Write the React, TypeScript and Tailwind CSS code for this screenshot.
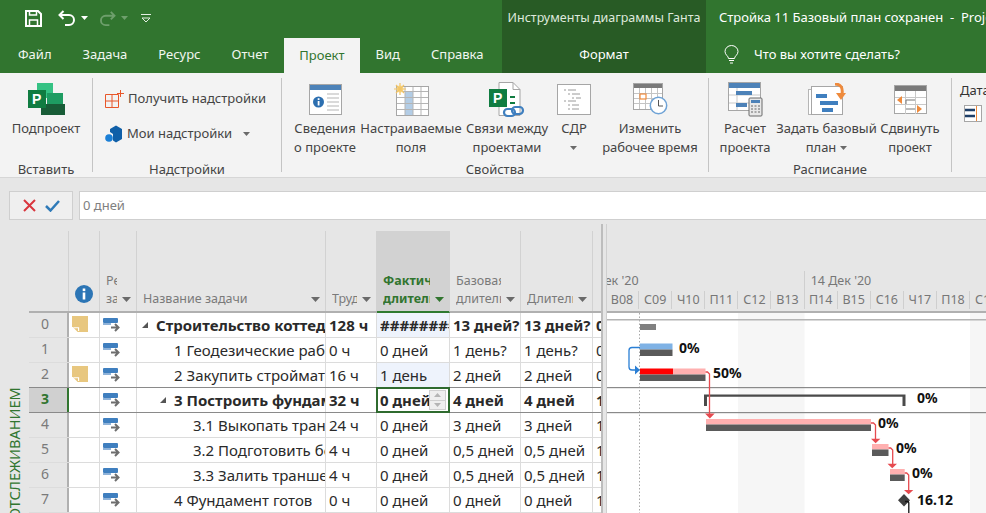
import React from 'react';

const rows = [
  { n: '0', note: true, indent: 'pl-[5px]', arrow: true, bold: true, name: 'Строительство коттеджа', work: '128 ч', fact: '##########', base: '13 дней?', dur: '13 дней?', next: '0', changed: true },
  { n: '1', note: false, indent: 'pl-[37px]', arrow: false, bold: false, name: '1 Геодезические работы', work: '0 ч', fact: '0 дней', base: '1 день?', dur: '1 день?', next: '0', changed: false },
  { n: '2', note: true, indent: 'pl-[37px]', arrow: false, bold: false, name: '2 Закупить стройматериалы', work: '16 ч', fact: '1 день', base: '2 дней', dur: '2 дней', next: '0', changed: true },
  { n: '3', note: false, indent: 'pl-[23px]', arrow: true, bold: true, name: '3 Построить фундамент', work: '32 ч', fact: '0 дней', base: '4 дней', dur: '4 дней', next: '1', changed: false },
  { n: '4', note: false, indent: 'pl-[56px]', arrow: false, bold: false, name: '3.1 Выкопать траншею', work: '24 ч', fact: '0 дней', base: '3 дней', dur: '3 дней', next: '1', changed: false },
  { n: '5', note: false, indent: 'pl-[56px]', arrow: false, bold: false, name: '3.2 Подготовить бетон', work: '4 ч', fact: '0 дней', base: '0,5 дней', dur: '0,5 дней', next: '1', changed: false },
  { n: '6', note: false, indent: 'pl-[56px]', arrow: false, bold: false, name: '3.3 Залить траншею', work: '4 ч', fact: '0 дней', base: '0,5 дней', dur: '0,5 дней', next: '1', changed: false },
  { n: '7', note: false, indent: 'pl-[37px]', arrow: false, bold: false, name: '4 Фундамент готов', work: '0 ч', fact: '0 дней', base: '0 дней', dur: '0 дней', next: '1', changed: false },
];

const days = ['В08', 'С09', 'Ч10', 'П11', 'С12', 'В13', 'П14', 'В15', 'С16', 'Ч17', 'П18', 'С19'];

const Caret = ({ className = 'fill-[#6a6a6a]' }: { className?: string }) => (
  <svg width="7" height="4" viewBox="0 0 7 4" className={className}>
    <path d="M0 0h7L3.5 4z" />
  </svg>
);

const SubprojectIcon = () => (
  <svg width="38" height="34" viewBox="0 0 38 34">
    <rect x="10" y="1" width="16" height="15" fill="#35c284" />
    <rect x="20" y="11" width="16" height="13" fill="#1e9c62" />
    <rect x="14" y="22" width="24" height="11" fill="#185c37" />
    <rect x="1" y="8" width="18" height="18" fill="#107c41" />
    <text x="5" y="22" fontSize="14" fontWeight="700" fill="#fff" fontFamily="Liberation Sans">P</text>
  </svg>
);

const InfoIcon = () => (
  <svg width="33" height="31" viewBox="0 0 33 31">
    <rect x="0.5" y="0.5" width="32" height="30" fill="#fff" stroke="#a6a6a6" />
    <rect x="1" y="1" width="31" height="5" fill="#4d82b8" />
    <circle cx="9.5" cy="18" r="5.5" fill="#2c6fb0" />
    <rect x="8.7" y="17" width="1.8" height="4.5" fill="#fff" />
    <rect x="8.7" y="14.2" width="1.8" height="1.8" fill="#fff" />
    <path d="M18 10h12M18 14h12M18 18h12M18 22h12M18 26h12" stroke="#b5b5b5" />
  </svg>
);

const FieldsIcon = () => (
  <svg width="36" height="33" viewBox="0 0 36 33">
    <rect x="3.5" y="3.5" width="32" height="29" fill="#fff" stroke="#a6a6a6" />
    <rect x="12" y="8" width="8" height="24" fill="#b3cde6" />
    <path d="M4 8.5h31M4 14.5h31M4 20.5h31M4 26.5h31M12 4v28M20 4v28M28 4v28" stroke="#b5b5b5" />
    <circle cx="7" cy="6" r="3.5" fill="#f7d98c" />
    <path d="M7 0v12M1 6h12M3 2l8 8M11 2l-8 8" stroke="#f3c566" strokeWidth="1.2" />
  </svg>
);

const LinksIcon = () => (
  <svg width="38" height="37" viewBox="0 0 38 37">
    <path d="M11 1.5h14l7 7v26H11z" fill="#fff" stroke="#a6a6a6" />
    <path d="M25 1.5v7h7" fill="none" stroke="#a6a6a6" />
    <rect x="1" y="8" width="18" height="18" fill="#107c41" />
    <text x="5" y="22" fontSize="14" fontWeight="700" fill="#fff" fontFamily="Liberation Sans">P</text>
    <path d="M22 16h5M22 22h5" stroke="#107c41" strokeWidth="2" />
    <rect x="16" y="28" width="11" height="7" rx="3.5" fill="none" stroke="#3f7fbf" strokeWidth="2.2" />
    <rect x="24" y="26" width="11" height="7" rx="3.5" fill="none" stroke="#3f7fbf" strokeWidth="2.2" />
  </svg>
);

const WbsIcon = () => (
  <svg width="34" height="31" viewBox="0 0 34 31">
    <rect x="0.5" y="0.5" width="33" height="30" fill="#fff" stroke="#a6a6a6" />
    <path d="M7 6h2M11 6h8M11 10h2M15 10h8M15 14h2M19 14h5M7 17h2M11 17h8M11 21h2M15 21h7M11 25h2M15 25h7" stroke="#9a9a9a" />
  </svg>
);

const CalendarIcon = () => (
  <svg width="35" height="32" viewBox="0 0 35 32">
    <rect x="0.5" y="0.5" width="29" height="26" fill="#fff" stroke="#a6a6a6" />
    <rect x="1" y="1" width="28" height="4" fill="#7a7a7a" />
    <path d="M1 10.5h28M1 15.5h28M1 20.5h28M6.5 5v21M12.5 5v21M18.5 5v21M24.5 5v21" stroke="#c4c4c4" />
    <rect x="7" y="11" width="6" height="5" fill="#fff" stroke="#ee8a3c" strokeWidth="1.2" />
    <circle cx="25.5" cy="22.5" r="8.2" fill="#fff" stroke="#6fa3d6" strokeWidth="1.5" />
    <path d="M25.5 17v6h4.5" fill="none" stroke="#555" />
  </svg>
);

const CalcIcon = () => (
  <svg width="35" height="35" viewBox="0 0 35 35">
    <rect x="0.5" y="0.5" width="32" height="28" fill="#fff" stroke="#a6a6a6" />
    <rect x="1" y="1" width="31" height="5" fill="#4d82b8" />
    <path d="M9 6v22M1 13h31M1 21h31" stroke="#c9c9c9" />
    <rect x="8" y="9" width="16" height="4" fill="#4d82b8" />
    <rect x="8" y="21" width="11" height="4" fill="#4d82b8" />
    <rect x="21" y="16" width="13" height="18" rx="1" fill="#e8e8e8" stroke="#6a6a6a" />
    <rect x="23" y="18" width="9" height="3" fill="#4d82b8" />
    <path d="M23 24h2M26.5 24h2M30 24h2M23 27h2M26.5 27h2M30 27h2M23 30h2M26.5 30h2M30 30h2" stroke="#666" />
  </svg>
);

const BaselineIcon = () => (
  <svg width="38" height="33" viewBox="0 0 38 33">
    <rect x="0.5" y="6.5" width="31" height="25" fill="#fff" stroke="#b5b5b5" />
    <rect x="3.5" y="3.5" width="31" height="28" fill="#fff" stroke="#a6a6a6" />
    <rect x="8" y="11" width="11" height="4" fill="#3f7fbf" />
    <rect x="12" y="18" width="18" height="4" fill="#3f7fbf" />
    <rect x="14" y="25" width="11" height="4" fill="#3f7fbf" />
    <path d="M27 1c6 0 8 4 7 10" fill="none" stroke="#ee8a3c" strokeWidth="3" />
    <path d="M28 10h10l-5 7z" fill="#ee8a3c" />
  </svg>
);

const MoveIcon = () => (
  <svg width="33" height="29" viewBox="0 0 33 29">
    <rect x="0.5" y="0.5" width="32" height="28" fill="#fff" stroke="#a6a6a6" />
    <rect x="1" y="1" width="31" height="5" fill="#7a7a7a" />
    <path d="M1 12.5h31M1 19.5h31M11.5 6v23M21.5 6v23" stroke="#c9c9c9" />
    <path d="M8 11l-5 4 5 4zM23 20l5 4-5 4z" fill="#ee8a3c" />
    <path d="M12 19v-4h9M12 24h9" fill="none" stroke="#777" />
  </svg>
);

const RibbonButton = ({ width, icon, lines }: { width: string; icon: React.ReactNode; lines: React.ReactNode[] }) => (
  <div className={`flex flex-col items-center shrink-0 ${width}`}>
    <div className="h-[36px] flex items-center justify-center">{icon}</div>
    <div className="mt-[2px] text-[13px] leading-[19px] text-[#444] text-center whitespace-nowrap">
      {lines.map((line, i) => (
        <div key={i} className="h-[19px] flex items-center justify-center gap-[4px]">{line}</div>
      ))}
    </div>
  </div>
);

const Sep = () => <div className="w-px shrink-0 my-[5px] bg-[#c4c4c4]" />;

const GroupLabel = ({ children }: { children: React.ReactNode }) => (
  <div className="mt-auto -mb-[2px] h-[19px] text-[13px] leading-[19px] text-center text-[#444]">{children}</div>
);

const HeadCell = ({ width, top, bottom, active = false }: { width: string; top?: string; bottom: string; active?: boolean }) => (
  <div className={`${width} shrink-0 border-r border-[#d2d2d2] flex flex-col justify-end pl-[6px] pb-[3px] text-[12.5px] leading-[18px] overflow-hidden ${active ? 'bg-[#d2d2d2] border-b-2 border-b-[#2f7a30] -mb-[2px] text-[#31752f] font-bold' : 'text-[#7a7a7a]'}`}>
    {top && <div className="h-[18px] overflow-hidden whitespace-nowrap mr-[19px]">{top}</div>}
    <div className="h-[18px] flex items-center">
      <span className="flex-1 min-w-0 overflow-hidden whitespace-nowrap">{bottom}</span>
      <span className="w-[19px] shrink-0 flex justify-center">
        <svg width="9" height="5" viewBox="0 0 9 5" className={active ? 'fill-[#31752f]' : 'fill-[#6a6a6a]'}>
          <path d="M0 0h9L4.500 5z" />
        </svg>
      </span>
    </div>
  </div>
);

const NoteIcon = () => (
  <svg width="16" height="16" viewBox="0 0 17 17" className="mb-[3px]">
    <path d="M0 0h17v17H6L0 11z" fill="#e8c77f" />
    <path d="M1.5 12.5H7V16" fill="none" stroke="#fff" strokeWidth="1.2" />
  </svg>
);

const ModeIcon = () => (
  <svg width="19" height="14" viewBox="0 0 19 14">
    <rect x="0" y="0" width="15" height="5" rx="1" fill="#3f7fbf" />
    <rect x="0" y="5" width="8" height="2" fill="#8fb3d9" />
    <path d="M8 9.5h7M12 6l3.5 3.5L12 13" fill="none" stroke="#6e6e6e" strokeWidth="2" />
  </svg>
);

const Cell = ({ width, children, className = '' }: { width: string; children?: React.ReactNode; className?: string }) => (
  <div className={`${width} shrink-0 h-full border-r border-[#dcdcdc] pl-[3px] flex items-center overflow-hidden whitespace-nowrap ${className}`}>
    {children}
  </div>
);

const GanttChart = () => (
  <svg viewBox="607 313 379 200" width="379" height="200" className="block" fontFamily="Noto Sans" fontWeight="700" fontSize="14" fill="#111">
    <rect x="738" y="313" width="66.5" height="200" fill="#f6f6f6" />
    <rect x="970" y="313" width="16" height="200" fill="#f6f6f6" />
    <path d="M639.5 313V513" stroke="#a8a8a8" strokeDasharray="1.5 2" />
    <rect x="607" y="319" width="379" height="1.5" fill="#b4b4b4" />
    <rect x="640" y="324" width="16" height="6" fill="#808080" />
    <rect x="640" y="343.5" width="32.5" height="6" fill="#7fb2e5" />
    <rect x="640" y="349.5" width="32.5" height="6.5" fill="#5a5a5a" />
    <rect x="640" y="368.5" width="33" height="6" fill="#ff0000" />
    <rect x="673" y="368.5" width="32.5" height="6" fill="#ffb0b0" />
    <rect x="640" y="374.5" width="65.5" height="6.5" fill="#5a5a5a" />
    <rect x="607" y="387" width="379" height="1.2" fill="#8a8a8a" />
    <rect x="607" y="412" width="379" height="1.2" fill="#8a8a8a" />
    <path d="M704 406V394.500H905.500V406H902.500V396.800H707V406Z" fill="#4a4a4a" />
    <rect x="706" y="419" width="165" height="5.5" fill="#ffb0b0" />
    <rect x="706" y="424.5" width="165" height="6.5" fill="#5a5a5a" />
    <rect x="872" y="444" width="16.5" height="5.5" fill="#ffb0b0" />
    <rect x="872" y="449.5" width="16.5" height="6.5" fill="#5a5a5a" />
    <rect x="890" y="469" width="14.7" height="5.5" fill="#ffb0b0" />
    <rect x="890" y="474.5" width="14.7" height="6.5" fill="#5a5a5a" />
    <path d="M705.5 372h2l2 2V414M871 423h2.500l2 2V439M888.500 448h2.200l2 2V464M904.700 473h2l2 2V490" fill="none" stroke="#e64a4f" strokeWidth="1.3" />
    <path d="M705 413.500h9.700l-4.850 5zM871 438.700h9.300l-4.650 4.600zM887.500 463.700h9.500l-4.750 4.600zM904 490h9.300l-4.650 4.300z" fill="#e64a4f" />
    <path d="M640 347.500h-8a3 3 0 0 0-3 3V367a3 3 0 0 0 3 3h4" fill="none" stroke="#2a7fd5" strokeWidth="1.3" />
    <path d="M635 365.500l5 4.500-5 4.500z" fill="#2a7fd5" />
    <path d="M904 494l6 6.300-6 6.300-6-6.300z" fill="#404040" />
    <path d="M905 501.500h2.500a1.300 1.300 0 0 1 1.300 1.300V513" fill="none" stroke="#111" strokeWidth="1.300" />
    <text x="679" y="353">0%</text>
    <text x="713" y="378">50%</text>
    <text x="917" y="403">0%</text>
    <text x="878" y="428">0%</text>
    <text x="896" y="453">0%</text>
    <text x="912" y="478">0%</text>
    <text x="917" y="505">16.12</text>
  </svg>
);

const App: React.FC = () => {
  return (
    <div className="w-[986px] h-[513px] overflow-hidden flex flex-col bg-[#e6e6e6] font-['Noto_Sans',sans-serif] text-[13px] text-[#333]">
      {/* Title bar + tabs */}
      <div className="h-[73px] shrink-0 flex bg-[#31752f] text-white">
        <div className="w-[502px] shrink-0 flex flex-col">
          <div className="h-[36px] flex items-center pl-[25px]">
            <svg width="17" height="17" viewBox="0 0 17 17" fill="none" stroke="#fff" strokeWidth="2">
              <path d="M1 1h12l3 3v12H1z" />
              <path d="M4.500 1v4h7V1M4.500 16v-6h8v6" strokeWidth="1.500" />
            </svg>
            <svg width="18" height="16" viewBox="0 0 18 16" fill="none" stroke="#fff" strokeWidth="2" className="ml-[16px]">
              <path d="M5.500 1L1.500 5l4 4M2 5h9a5 5 0 0 1 0 10H7" />
            </svg>
            <Caret className="fill-white ml-[5px]" />
            <svg width="17" height="15" viewBox="0 0 18 16" fill="none" stroke="#6e9f6c" strokeWidth="2" className="ml-[11px]">
              <path d="M12.500 1l4 4-4 4M16 5H7a5 5 0 0 0 0 10h4" />
            </svg>
            <Caret className="fill-[#6e9f6c] ml-[5px]" />
            <svg width="10" height="9" viewBox="0 0 10 9" fill="none" stroke="#e4efe3" className="ml-[13px]">
              <path d="M0 .5h10" />
              <path d="M1 4l4 4 4-4z" />
            </svg>
          </div>
          <div className="h-[37px] flex items-stretch pl-[2.500px]">
            {['Файл', 'Задача', 'Ресурс', 'Отчет', 'Проект', 'Вид', 'Справка'].map((tab) => (
              <div key={tab} className={`px-[15.500px] flex items-center leading-none ${tab === 'Проект' ? 'bg-[#f3f3f3] text-[#31752f] mt-[2px]' : 'text-[#f2f7f1]'}`}>
                {tab}
              </div>
            ))}
          </div>
        </div>
        <div className="w-[204px] shrink-0 bg-[#285b25] flex flex-col items-center text-[#dfe9dd]">
          <div className="h-[36px] flex items-center whitespace-nowrap text-[12.500px]">Инструменты диаграммы Ганта</div>
          <div className="h-[37px] flex items-center text-white">Формат</div>
        </div>
        <div className="flex-1 min-w-0 flex flex-col pl-[13px] overflow-hidden whitespace-nowrap">
          <div className="h-[36px] flex items-center whitespace-pre">Стройка 11 Базовый план сохранен  -  Project Professional</div>
          <div className="h-[37px] flex items-center">
            <svg width="15" height="19" viewBox="0 0 15 19" fill="none" stroke="#fff" className="ml-[5px]">
              <path d="M4.500 13.500c0-2.500-3.500-3.500-3.500-7a6.500 6 0 0 1 13 0c0 3.500-3.500 4.500-3.500 7zM5 15.500h5M6 18h3" />
            </svg>
            <span className="ml-[15px]">Что вы хотите сделать?</span>
          </div>
        </div>
      </div>

      {/* Ribbon */}
      <div className="h-[105px] shrink-0 flex bg-[#f3f3f3] border-b border-[#d6d6d6]">
        <div className="w-[92px] shrink-0 flex flex-col pt-[8px]">
          <RibbonButton width="w-full" icon={<SubprojectIcon />} lines={['Подпроект']} />
          <GroupLabel>Вставить</GroupLabel>
        </div>
        <Sep />
        <div className="w-[188px] shrink-0 flex flex-col">
          <div className="pl-[12px] pt-[17px] flex flex-col gap-[17px]">
            <div className="h-[18px] flex items-center gap-[4px] whitespace-nowrap text-[#444]">
              <svg width="19" height="18" viewBox="0 0 19 18" fill="none" stroke="#e8572a">
                <path d="M.500 4.500h13v13H.500zM7 4.500v13M.500 11h13M15.500 0v7M12 3.500h7" />
              </svg>
              Получить надстройки
            </div>
            <div className="h-[18px] flex items-center gap-[4px] whitespace-nowrap text-[#444]">
              <svg width="18" height="18" viewBox="0 0 18 18">
                <circle cx="4" cy="13" r="3.800" fill="#1b7fd6" />
                <path d="M5 4l6-3.500 6 3.500v10l-6 3.500-3-2V9L5 7z" fill="#0f5fa8" />
              </svg>
              Мои надстройки
              <Caret className="fill-[#6a6a6a] ml-[7px]" />
            </div>
          </div>
          <GroupLabel>Надстройки</GroupLabel>
        </div>
        <Sep />
        <div className="w-[426px] shrink-0 flex flex-col pt-[8px]">
          <div className="flex pl-[8px]">
            <RibbonButton width="w-[70px]" icon={<InfoIcon />} lines={['Сведения', 'о проекте']} />
            <RibbonButton width="w-[102px]" icon={<FieldsIcon />} lines={['Настраиваемые', 'поля']} />
            <RibbonButton width="w-[90px]" icon={<LinksIcon />} lines={['Связи между', 'проектами']} />
            <RibbonButton width="w-[44px]" icon={<WbsIcon />} lines={['СДР', <Caret key="c" />]} />
            <RibbonButton width="w-[108px]" icon={<CalendarIcon />} lines={['Изменить', 'рабочее время']} />
          </div>
          <GroupLabel>Свойства</GroupLabel>
        </div>
        <Sep />
        <div className="w-[242px] shrink-0 flex flex-col pt-[8px]">
          <div className="flex pl-[3px]">
            <RibbonButton width="w-[66px]" icon={<CalcIcon />} lines={['Расчет', 'проекта']} />
            <RibbonButton width="w-[97px]" icon={<BaselineIcon />} lines={['Задать базовый', <React.Fragment key="p">план <Caret /></React.Fragment>]} />
            <RibbonButton width="w-[70px]" icon={<MoveIcon />} lines={['Сдвинуть', 'проект']} />
          </div>
          <GroupLabel>Расписание</GroupLabel>
        </div>
        <Sep />
        <div className="flex-1 min-w-0 pl-[8px] pt-[8px] overflow-hidden">
          <div className="leading-[18px]">Дата</div>
          <svg width="18" height="17" viewBox="0 0 18 17" className="mt-[6px] ml-[4px]">
            <rect x=".5" y=".5" width="17" height="16" fill="#fff" stroke="#a6a6a6" />
            <path d="M1 5h10M1 11h10" stroke="#1f3f68" strokeWidth="2.500" />
            <path d="M12.500 1v15" stroke="#ee8a3c" />
          </svg>
        </div>
      </div>

      {/* Formula bar */}
      <div className="h-[46px] shrink-0 flex items-start gap-[6px] pt-[13px] pl-[9px]">
        <div className="w-[64px] h-[29px] border border-[#cfcfcf] bg-[#efefef] flex items-center justify-around px-[8px]">
          <svg width="13" height="13" viewBox="0 0 13 13" stroke="#d9363e" strokeWidth="2"><path d="M1 1l11 11M12 1L1 12" /></svg>
          <svg width="15" height="12" viewBox="0 0 15 12" fill="none" stroke="#2f7ab8" strokeWidth="2.500"><path d="M1 6l4.500 4.500L14 1" /></svg>
        </div>
        <div className="flex-1 h-[29px] border border-[#cfcfcf] border-r-0 bg-white flex items-center pl-[3px] text-[#808080]">0 дней</div>
      </div>

      {/* Table and chart */}
      <div className="flex-1 min-h-0 flex overflow-hidden">
        <div className="w-[29px] shrink-0 overflow-hidden pt-[163px] pl-[7px]">
          <div className="[writing-mode:vertical-rl] rotate-180 h-[140px] flex justify-end text-[14.500px] leading-[15px] text-[#31752f] whitespace-nowrap">
            ОТСЛЕЖИВАНИЕМ
          </div>
        </div>
        <div className="w-[572px] shrink-0 flex flex-col overflow-hidden pt-[7px] text-[15px] text-[#2a2a2a]">
          <div className="h-[82px] shrink-0 flex border-b-2 border-[#b0b0b0]">
            <div className="w-[40px] shrink-0 border-r border-[#d2d2d2]" />
            <div className="w-[31px] shrink-0 border-r border-[#d2d2d2] flex items-end justify-center pb-[8px]">
              <svg width="18" height="18" viewBox="0 0 18 18">
                <circle cx="9" cy="9" r="9" fill="#2c75b5" />
                <rect x="7.700" y="7.500" width="2.600" height="7" fill="#fff" />
                <rect x="7.700" y="3.500" width="2.600" height="2.600" fill="#fff" />
              </svg>
            </div>
            <HeadCell width="w-[37px]" top="Режим" bottom="за" />
            <HeadCell width="w-[189px]" bottom="Название задачи" />
            <HeadCell width="w-[51px]" bottom="Трудозатраты" />
            <HeadCell width="w-[73px]" top="Фактическая" bottom="длительность" active />
            <HeadCell width="w-[71px]" top="Базовая" bottom="длительность" />
            <HeadCell width="w-[72px]" bottom="Длительность" />
            <div className="flex-1" />
          </div>
          {rows.map((r, i) => (
            <div key={r.n} className={`h-[25px] shrink-0 flex border-b ${i === 2 || i === 3 ? 'border-[#8a8a8a]' : 'border-[#dcdcdc]'} ${r.bold ? 'font-bold' : ''} bg-white`}>
              <div className={`w-[40px] shrink-0 h-full flex items-center justify-center pr-[6px] pb-[3px] text-[14px] border-r-2 ${i === 3 ? 'bg-[#d0d0d0] text-[#31752f] font-bold border-[#31752f]' : 'bg-[#e6e6e6] text-[#7a7a7a] font-normal border-[#b0b0b0]'}`}>
                {r.n}
              </div>
              <Cell width="w-[31px]">{r.note && <NoteIcon />}</Cell>
              <Cell width="w-[37px]"><ModeIcon /></Cell>
              <Cell width="w-[189px]" className={r.indent}>
                {r.arrow && (
                  <svg width="7" height="7" viewBox="0 0 7 7" className="shrink-0 mr-[7px] fill-[#555]"><path d="M6 0v6H0z" /></svg>
                )}
                {r.name}
              </Cell>
              <Cell width="w-[51px]">{r.work}</Cell>
              <Cell width="w-[73px]" className={`relative overflow-visible ${r.changed ? 'bg-[#eef3fc]' : ''}`}>
                <span className="block overflow-hidden">{r.fact}</span>
                {i === 3 && (
                  <div className="absolute -inset-[1px] z-10 border-2 border-[#2f6b2f] flex items-center justify-end pr-[2px]">
                    <div className="w-[17px] h-[20px] flex flex-col bg-[#efefef] border border-[#d0d0d0]">
                      <div className="flex-1 flex items-center justify-center border-b border-[#d0d0d0]"><Caret className="fill-[#b5b5b5] rotate-180" /></div>
                      <div className="flex-1 flex items-center justify-center"><Caret className="fill-[#b5b5b5]" /></div>
                    </div>
                  </div>
                )}
              </Cell>
              <Cell width="w-[71px]">{r.base}</Cell>
              <Cell width="w-[72px]">{r.dur}</Cell>
              <div className="flex-1 h-full pl-[3px] flex items-center overflow-hidden">{r.next}</div>
            </div>
          ))}
        </div>
        <div className="w-[6px] shrink-0 border-l-[2px] border-r border-l-[#bdbdbd] border-r-[#cfcfcf]" />
        <div className="flex-1 min-w-0 flex flex-col overflow-hidden bg-white">
          <div className="h-[89px] shrink-0 flex flex-col justify-end bg-[#e6e6e6] border-b-2 border-[#b0b0b0] text-[12.500px] text-[#777] overflow-hidden">
            <div className="h-[20px] flex -ml-[32px] whitespace-nowrap">
              <div className="w-[229.700px] shrink-0 pl-[3px] leading-[20px] border-r border-[#cfcfcf]">07 Дек '20</div>
              <div className="pl-[6px] leading-[20px]">14 Дек '20</div>
            </div>
            <div className="h-[20px] flex -ml-[1px] pb-[2px]">
              {days.map((d) => (
                <div key={d} className="w-[33.100px] shrink-0 border-r border-[#cfcfcf] text-center leading-[17px]">{d}</div>
              ))}
            </div>
          </div>
          <GanttChart />
        </div>
      </div>
    </div>
  );
};

export default App;
